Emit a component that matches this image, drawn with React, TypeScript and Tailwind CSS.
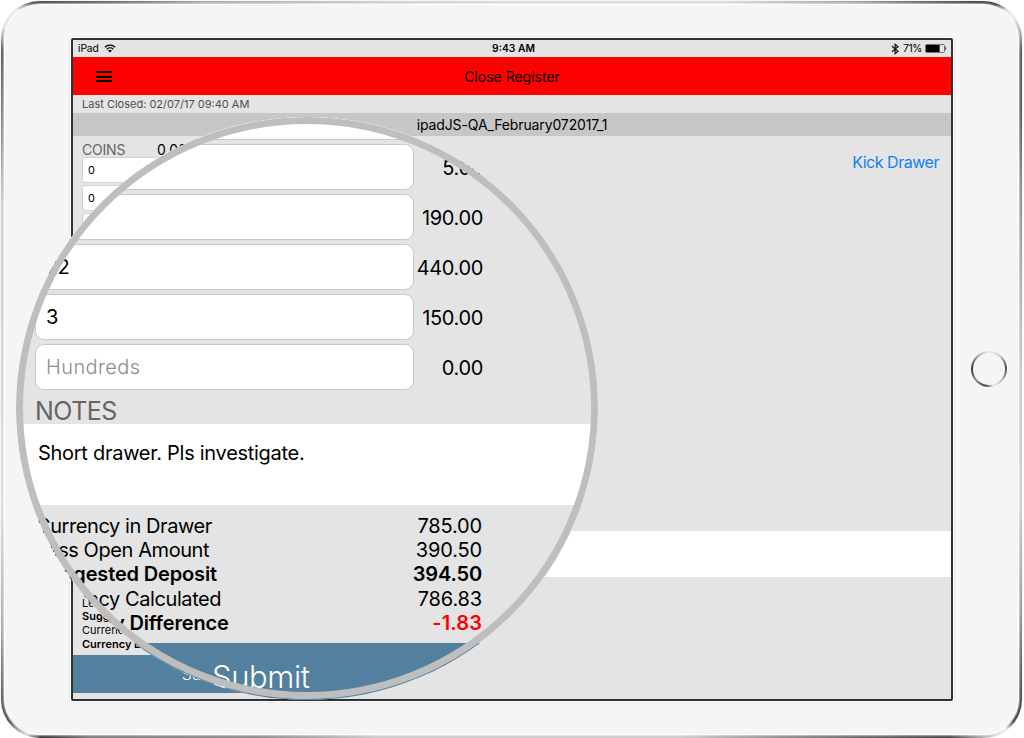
import React from "react";

const lensRows = [
  { text: "", amount: "" },
  { text: "1", amount: "5.00" },
  { text: "19", amount: "190.00" },
  { text: "22", amount: "440.00" },
  { text: "3", amount: "150.00" },
  { text: "", amount: "0.00" },
];

function WifiIcon() {
  return (
    <svg width="12" height="9" viewBox="0 0 12 9" fill="none" stroke="#000" strokeWidth="1.3">
      <path d="M0.9 3.3C3.7 0.5 8.3 0.5 11.1 3.3" />
      <path d="M2.8 5.2C4.6 3.5 7.4 3.5 9.2 5.2" />
      <path d="M4.1 6.5C5.1 5.6 6.9 5.6 7.9 6.5L6 8.5Z" fill="#000" stroke="none" />
    </svg>
  );
}

function BluetoothIcon() {
  return (
    <svg width="8" height="12" viewBox="0 0 8 12" fill="none" stroke="#111" strokeWidth="1.2">
      <path d="M1 3.2L7 8.3L4.1 10.7V1.3L7 3.7L1 8.8" />
    </svg>
  );
}

function BatteryIcon() {
  return (
    <svg width="22" height="9" viewBox="0 0 22 9">
      <rect x="0.5" y="0.5" width="19" height="8" rx="1.2" fill="none" stroke="#555" strokeWidth="0.8" />
      <rect x="1" y="1" width="13.6" height="7" fill="#000" />
      <path d="M20.3 2.8C21.5 3 21.5 6 20.3 6.2Z" fill="#000" />
    </svg>
  );
}

function Total({ label, amount, bold, red }: { label: string; amount: string; bold?: boolean; red?: boolean }) {
  return (
    <div className={`flex h-[24.2px] items-center justify-between text-[20px] ${bold ? "font-semibold" : ""}`}>
      <span className={bold ? "tracking-[-0.15px]" : "tracking-[-0.42px]"}>{label}</span>
      <span className={red ? "tracking-[0.1px] text-[#fb0007]" : "tracking-[-0.15px]"}>{amount}</span>
    </div>
  );
}

function Lens() {
  return (
    <div className="absolute left-[16px] top-[117px] h-[583px] w-[582px] overflow-hidden rounded-full bg-[#e4e4e4]">
      <div className="flex flex-col whitespace-nowrap">
        <div className="-mt-[23px] flex w-[467px] flex-col gap-[4px] pl-[19px]">
          {lensRows.map((r, i) => (
            <div key={i} className="flex h-[46px] items-center justify-between text-[20px]">
              <div className="flex h-[46px] w-[379px] items-center rounded-[9px] border border-[#c9c9c9] bg-white pl-[10px] tracking-[-0.6px]">
                {i === 5 ? <span className="font-light tracking-[0.4px] text-[#8e8e8e]">Hundreds</span> : r.text}
              </div>
              <span className="pt-[2px] tracking-[-0.35px]">{r.amount}</span>
            </div>
          ))}
        </div>
        <div className="flex h-[34px] items-center pl-[19px] pt-[9px] text-[25px] tracking-[-0.5px] text-[#666]">NOTES</div>
        <div className="h-[81px] bg-white pl-[22px] pt-[14px] text-[20px] leading-[30px] tracking-[-0.28px]">Short drawer. Pls investigate.</div>
        <div className="h-[138px] w-[466px] pl-[20px] pt-[9px]">
          <Total label="Currency in Drawer" amount="785.00" />
          <Total label="Less Open Amount" amount="390.50" />
          <Total label="Suggested Deposit" amount="394.50" bold />
          <Total label="Currency Calculated" amount="786.83" />
          <Total label="Currency Difference" amount="-1.83" bold red />
        </div>
        <div className="h-[60px] w-[464px] bg-[#5480a0] pl-[196px] pt-[12px] text-[31px] font-light leading-[43px] tracking-[-0.4px] text-white">Submit</div>
      </div>
      <div className="absolute left-0 top-0 size-[582px] rounded-full border-[7px] border-[#bebebe]" />
    </div>
  );
}

export default function App() {
  return (
    <div className="relative h-[738px] w-[1024px] overflow-hidden bg-white pl-[1px] pt-[1px] font-['Inter',sans-serif] text-black">
      <div className="h-[737px] w-[1021px] rounded-[39px] bg-[conic-gradient(#d8dad9_0deg,#d8dad9_30deg,#a4a6a5_43deg,#555_50deg,#333_53deg,#ddd_54deg,#eee_55deg,#555_58deg,#555_63deg,#888_70deg,#aaa_80deg,#c5c7c6_90deg,#ccc_105deg,#999_115deg,#444_123deg,#333_125deg,#eee_126deg,#ddd_127deg,#444_130deg,#777_140deg,#c6c8c7_155deg,#c8c8c8_200deg,#888_215deg,#777_229deg,#333_232deg,#ddd_233deg,#444_235deg,#555_237deg,#aaa_243deg,#ddd_255deg,#ccc_280deg,#ccc_288deg,#999_294deg,#555_302deg,#ddd_304deg,#eee_306deg,#444_307.5deg,#666_312deg,#aaa_320deg,#ccc_340deg,#d8dad9_360deg)] p-[3px] shadow-[0_0_1px_#aaa]">
        <div className="flex h-[731px] w-[1015px] rounded-[36px] border border-white bg-[#f4f5f7] pl-[66px] pt-[33px] shadow-[0_0_2px_1px_rgba(255,255,255,0.6)]">
          <div className="flex h-[663px] w-[882px] flex-col overflow-hidden rounded-[2px] border-2 border-[#303232] bg-[#e4e4e4] shadow-[0_0_0_1px_#fff,0_0_2px_1px_#ccc]">
            <div className="grid h-[17px] shrink-0 grid-cols-3 items-center pl-[5px] pr-[4px] text-[10.3px]">
              <div className="flex items-center gap-[5px]"><span className="tracking-[-0.1px]">iPad</span><WifiIcon /></div>
              <span className="pl-[2px] text-center font-semibold">9:43 AM</span>
              <div className="flex items-center justify-end"><BluetoothIcon /><span className="ml-[4px] mr-[3px] tracking-[-0.4px]">71%</span><BatteryIcon /></div>
            </div>
            <div className="relative flex h-[38px] shrink-0 items-center justify-center bg-[#ff0000] text-[14px]">
              <div className="absolute left-[23px] top-[14px] flex flex-col gap-[2.5px]">
                <i className="h-[2px] w-[16px] bg-black" /><i className="h-[2px] w-[16px] bg-black" /><i className="h-[2px] w-[16px] bg-black" />
              </div>
              <span>Close Register</span>
            </div>
            <div className="flex h-[18px] shrink-0 items-center pl-[9px] text-[11px] text-[#505050]">Last Closed: 02/07/17 09:40 AM</div>
            <div className="flex h-[23px] shrink-0 items-center justify-center bg-[#c7c7c7] text-[14px] tracking-[-0.12px]">ipadJS-QA_February072017_1</div>
            <div className="flex h-[395px] shrink-0 justify-between pl-[9px] pr-[12px]">
              <div className="flex w-[160px] flex-col gap-[2px]">
                <div className="flex h-[19px] items-center pt-[8px] text-[14px]"><span className="w-[75px] tracking-[-0.2px] text-[#666]">COINS</span><span>0.00</span></div>
                {["0", "0", "19", "22"].map((v, i) => (
                  <div key={i} className="flex h-[26px] items-center rounded-[4px] border border-[#d2d2d2] bg-white pl-[5px] text-[11px]">{v}</div>
                ))}
              </div>
              <span className="pt-[16px] text-[16px] leading-[20px] tracking-[-0.47px] text-[#0f80f7]">Kick Drawer</span>
            </div>
            <div className="h-[46px] shrink-0 bg-white" />
            <div className="h-[78px] shrink-0 pl-[9px] pt-[6px] text-[11px] leading-[13.7px]">
              <div>Currency in Drawer</div>
              <div>Less Open Amount</div>
              <div className="font-semibold">Suggested Deposit</div>
              <div>Currency Calculated</div>
              <div className="font-semibold">Currency Difference</div>
            </div>
            <div className="flex h-[38px] w-[269px] shrink-0 items-center justify-center bg-[#5480a0] text-[16px] font-light text-white">Submit</div>
          </div>
          <div className="ml-[18px] mt-[313px] size-[36px] rounded-full bg-[conic-gradient(#eee_0deg,#ccc_40deg,#444_85deg,#bbb_130deg,#eee_165deg,#444_190deg,#888_230deg,#333_275deg,#999_310deg,#eee_360deg)] p-[2px]">
            <div className="size-[32px] rounded-full bg-[#f4f5f7]" />
          </div>
        </div>
      </div>
      <Lens />
    </div>
  );
}
